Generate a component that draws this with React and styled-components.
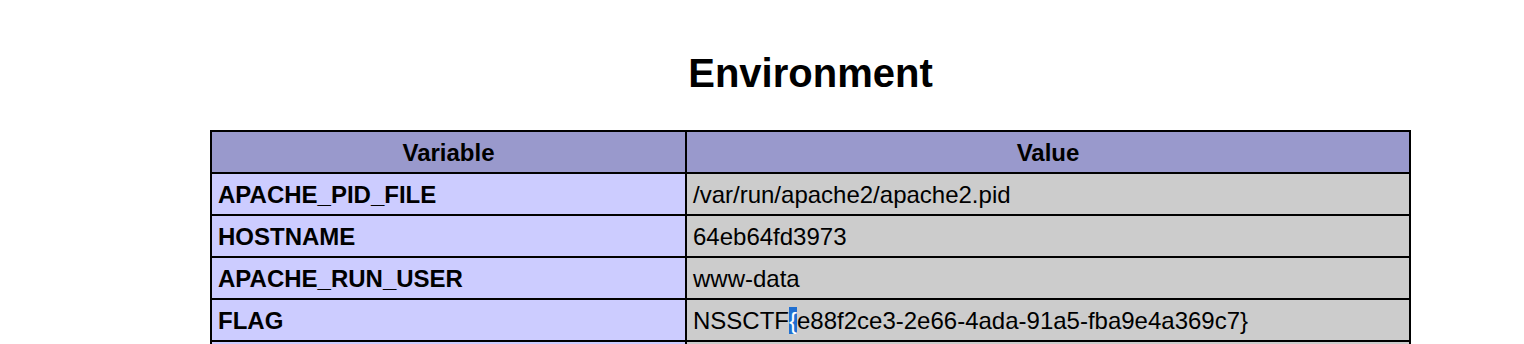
import React from 'react';
import styled, { createGlobalStyle } from 'styled-components';

const GlobalStyle = createGlobalStyle`
  html, body {
    margin: 0;
    padding: 0;
    background-color: #ffffff;
    color: #000000;
    overflow: hidden;
  }
  body {
    font-family: "Liberation Sans", Arial, sans-serif;
  }
`;

const Center = styled.div`
  width: 1201px;
  margin-left: 210px;
  padding-top: 50px;
`;

const Title = styled.h2`
  margin: 0 0 34px;
  font-size: 40px;
  font-weight: bold;
  text-align: center;
  line-height: 46px;
`;

const Table = styled.table`
  border-collapse: collapse;
  table-layout: fixed;
  width: 1201px;
`;

const Th = styled.th`
  border: 2px solid #000000;
  background-color: #9999cc;
  font-size: 24px;
  font-weight: bold;
  text-align: center;
  padding: 7px 6px 5px;
  line-height: 28px;
`;

const Td = styled.td`
  border: 2px solid #000000;
  font-size: 24px;
  line-height: 28px;
  padding: 7px 6px 5px;
  vertical-align: baseline;
  white-space: nowrap;
  background-color: ${p => (p.$e ? '#ccccff' : '#cccccc')};
  font-weight: ${p => (p.$e ? 'bold' : 'normal')};
`;

const Sel = styled.span`
  background-color: #1f6fd1;
  color: #ffffff;
`;

const rows = [
  ['APACHE_PID_FILE', '/var/run/apache2/apache2.pid'],
  ['HOSTNAME', '64eb64fd3973'],
  ['APACHE_RUN_USER', 'www-data'],
  ['FLAG', <>NSSCTF<Sel>{'{'}</Sel>e88f2ce3-2e66-4ada-91a5-fba9e4a369c7{'}'}</>],
  ['\u00a0', '\u00a0'],
];

export default function App() {
  return (
    <>
      <GlobalStyle />
      <Center>
        <Title>Environment</Title>
        <Table>
          <colgroup>
            <col style={{ width: '475px' }} />
            <col />
          </colgroup>
          <thead>
            <tr>
              <Th>Variable</Th>
              <Th>Value</Th>
            </tr>
          </thead>
          <tbody>
            {rows.map(([k, v], i) => (
              <tr key={i}>
                <Td $e>{k}</Td>
                <Td>{v}</Td>
              </tr>
            ))}
          </tbody>
        </Table>
      </Center>
    </>
  );
}
